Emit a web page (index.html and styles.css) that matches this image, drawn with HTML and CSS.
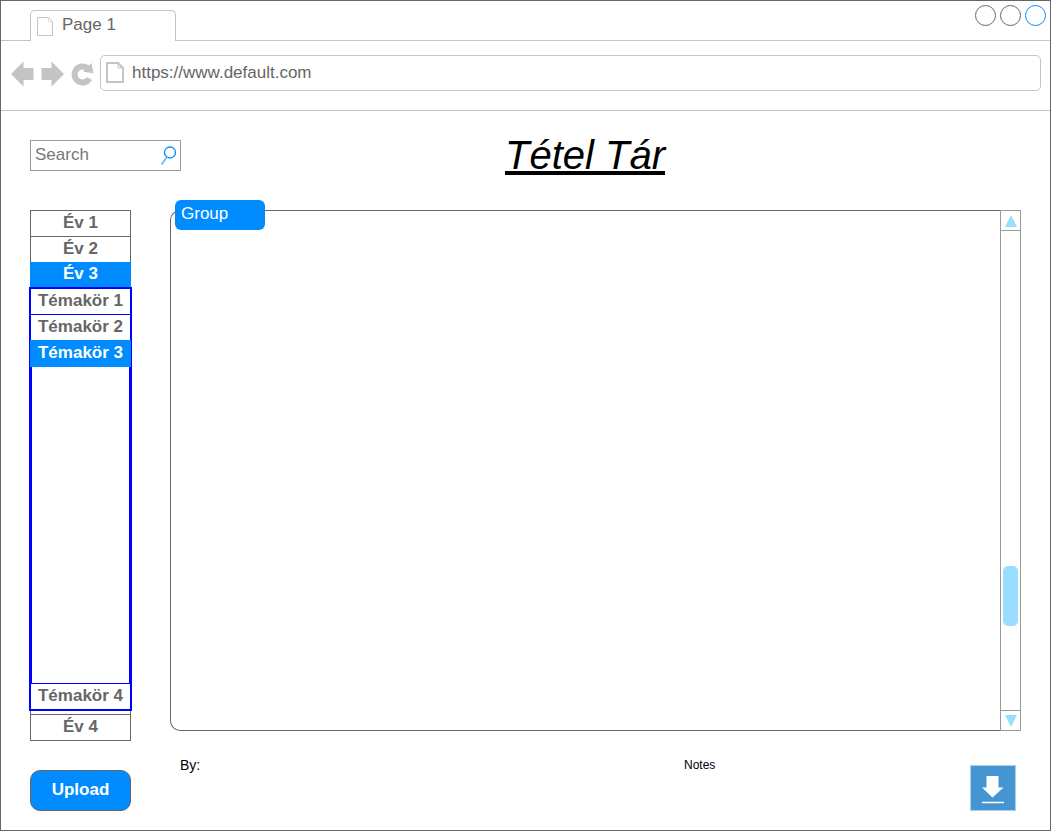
FILE: index.html
```html
<!DOCTYPE html>
<html lang="hu">
<head>
<meta charset="utf-8">
<meta name="viewport" content="width=device-width, initial-scale=1">
<title>Tétel Tár</title>
<link rel="stylesheet" href="styles.css">
</head>
<body>
<div class="window">
  <header class="tab-strip">
    <div class="tab">
      <svg class="tab-icon" width="16" height="19" viewBox="0 0 16 19" fill="none" stroke="#c4c4c4"><path d="M.5.5H11.500L15.500 4.500V18.500H.5Z"/><path d="M11.500.5V4.500H15.500" stroke="#e0e0e0"/></svg>
      <span>Page 1</span>
    </div>
    <div class="window-controls">
      <button class="dot" aria-label="Minimize"></button>
      <button class="dot" aria-label="Maximize"></button>
      <button class="dot dot-active" aria-label="Close"></button>
    </div>
  </header>

  <div class="toolbar">
    <button class="tool" aria-label="Back"><svg width="23" height="26" viewBox="0 0 23 26" fill="#c4c4c4"><path d="M0 13 12.500 .5V7H22.500V19H12.500V25.500Z"/></svg></button>
    <button class="tool" aria-label="Forward"><svg width="23" height="26" viewBox="0 0 23 26" fill="#c4c4c4"><path d="M23 13 10.500 .5V7H.5V19H10.500V25.500Z"/></svg></button>
    <button class="tool" aria-label="Reload"><svg width="23" height="26" viewBox="0 0 23 26"><path d="M16.500 7.200A8 8 0 1 0 18.500 17.500" fill="none" stroke="#c4c4c4" stroke-width="6"/><path d="M20.500 2 22.500 12.500 12 10.500Z" fill="#c4c4c4"/></svg></button>
    <div class="address">
      <svg width="18" height="21" viewBox="0 0 18 21" fill="none" stroke="#c4c4c4" stroke-width="2"><path d="M1 1H12L17 6V20H1Z"/><path d="M12 1V6H17" stroke-width="1"/></svg>
      <input class="address-input" type="text" value="https://www.default.com" aria-label="Address">
    </div>
  </div>

  <main class="page">
    <div class="page-head">
      <div class="search">
        <input class="search-input" type="text" placeholder="Search" aria-label="Search">
        <svg width="17" height="19" viewBox="0 0 17 19" fill="none" stroke="#008cff" stroke-width="1.300"><circle cx="10" cy="6.500" r="5.500"/><path d="M7 11 1.500 18.500" stroke="#66baff" stroke-width="1.800"/></svg>
      </div>
      <h1 class="title">Tétel Tár</h1>
    </div>

    <div class="columns">
      <div class="sidebar">
        <ul class="years">
          <li><button class="item">Év 1</button></li>
          <li class="ruled"><button class="item">Év 2</button></li>
          <li class="open">
            <button class="item item-selected">Év 3</button>
            <ul class="topics">
              <li><button class="item">Témakör 1</button></li>
              <li class="ruled"><button class="item">Témakör 2</button></li>
              <li class="topic-open"><button class="item item-selected item-tall">Témakör 3</button></li>
              <li class="ruled"><button class="item">Témakör 4</button></li>
            </ul>
          </li>
          <li class="ruled"><button class="item">Év 4</button></li>
        </ul>
        <button class="upload">Upload</button>
      </div>

      <div class="content">
        <section class="panel" aria-labelledby="group-label">
          <h2 class="group-label" id="group-label">Group</h2>
          <div class="panel-body"></div>
          <div class="scrollbar">
            <button class="scroll-button" aria-label="Scroll up"><svg width="12" height="12" viewBox="0 0 12 12" fill="#99ddff"><path d="M6 0 12 12H0Z"/></svg></button>
            <div class="track"><div class="thumb"></div></div>
            <button class="scroll-button" aria-label="Scroll down"><svg width="12" height="12" viewBox="0 0 12 12" fill="#99ddff"><path d="M0 0H12L6 12Z"/></svg></button>
          </div>
        </section>
        <footer class="details">
          <span class="author">By:</span>
          <span class="notes">Notes</span>
          <button class="download" aria-label="Download"><svg width="46" height="46" viewBox="0 0 46 46"><path d="M16.500 11H28.500V22.500H33.500L22.500 32.500 12 22.500H16.500Z" fill="#fff"/><path d="M12 37.500H34" stroke="#fff" stroke-width="1.500"/></svg></button>
        </footer>
      </div>
    </div>
  </main>
</div>
</body>
</html>
```
FILE: styles.css
```css
* { box-sizing: border-box; }

body {
  margin: 0;
  background: #fff;
  color: #666;
  font: 17px/20px "Liberation Sans", Arial, sans-serif;
}

button, input { font: inherit; color: inherit; }
button { border: 0; padding: 0; background: none; cursor: pointer; }
svg { display: block; flex: none; }
ul { list-style: none; margin: 0; padding: 0; }

.window {
  display: flex;
  flex-direction: column;
  min-height: calc(100vh - 1px);
  margin: 0 1px 1px 0;
  border: 1px solid #666;
}

.tab-strip {
  display: flex;
  justify-content: space-between;
  height: 40px;
  padding: 9px 4px 0 29px;
  border-bottom: 1px solid #c4c4c4;
}

.tab {
  display: flex;
  gap: 9px;
  width: 146px;
  height: 31px;
  padding: 4px 6px 0;
  border: 1px solid #c4c4c4;
  border-bottom: 0;
  border-radius: 5px 5px 0 0;
  background: #fff;
}

.tab-icon { margin-top: 2px; }

.window-controls { display: flex; gap: 4px; margin-top: -5px; }
.dot { width: 21px; height: 21px; border: 1px solid #666; border-radius: 50%; }
.dot-active { border-color: #008cff; }

.toolbar {
  display: flex;
  align-items: center;
  gap: 7px;
  height: 70px;
  padding: 0 9px 6px 10px;
  border-bottom: 1px solid #c4c4c4;
}

.tool { padding-top: 3px; }

.address {
  display: flex;
  flex: 1;
  align-items: center;
  gap: 8px;
  height: 36px;
  margin-left: -1px;
  padding: 0 5px;
  border: 1px solid #c4c4c4;
  border-radius: 5px;
}

.address-input, .search-input {
  flex: 1;
  min-width: 0;
  padding: 0;
  border: 0;
  outline: 0;
  background: none;
}

.search-input::placeholder { color: #777; opacity: 1; }

.page {
  display: flex;
  flex: 1;
  flex-direction: column;
  padding: 19px 29px;
}

.page-head { display: flex; align-items: center; height: 50px; }

.search {
  display: flex;
  align-items: center;
  width: 151px;
  height: 31px;
  padding: 0 3px 0 4px;
  border: 1px solid #999;
}

.title {
  flex: 1;
  margin: 0;
  padding-right: 32px;
  color: #000;
  font-size: 40px;
  font-style: italic;
  font-weight: 400;
  line-height: 48px;
  text-align: center;
  text-decoration: underline;
}

.columns { display: flex; flex: 1; gap: 39px; margin-top: 30px; }

.sidebar { display: flex; flex-direction: column; gap: 29px; width: 101px; }

.years {
  display: flex;
  flex: 1;
  flex-direction: column;
  border: 1px solid #666;
}

.item {
  display: block;
  width: 100%;
  height: 25px;
  padding-bottom: 2px;
  font-weight: 700;
  white-space: nowrap;
}

.item-selected {
  width: calc(100% + 2px);
  margin: 0 -1px;
  background: #008cff;
  color: #fff;
}

.item-tall { height: 27px; }
.ruled { border-top: 1px solid #666; }
.open { display: flex; flex: 1; flex-direction: column; margin-bottom: 3px; }

.topics {
  display: flex;
  flex: 1;
  flex-direction: column;
  margin: 0 -2px;
  border: 2px solid #00f;
}

.topics .ruled { border-color: #00f; }

.topic-open {
  flex: 1;
  border: solid #00f;
  border-width: 0 1px;
}

.topic-open .item {
  width: calc(100% + 4px);
  margin: 0 -2px;
}

.upload {
  height: 41px;
  padding-bottom: 2px;
  border: 1px solid #666;
  border-radius: 10px;
  background: #008cff;
  color: #fff;
  font-weight: 700;
}

.content { display: flex; flex: 1; flex-direction: column; min-width: 0; }

.panel { position: relative; display: flex; flex: 1; }

.panel-body {
  flex: 1;
  border: 1px solid #666;
  border-right: 0;
  border-radius: 10px 0 0 10px;
}

.group-label {
  position: absolute;
  top: -10px;
  left: 5px;
  width: 90px;
  height: 30px;
  margin: 0;
  padding: 4px 6px;
  border-radius: 6px;
  background: #008cff;
  color: #fff;
  font-size: 17px;
  font-weight: 400;
}

.scrollbar {
  display: flex;
  flex-direction: column;
  width: 21px;
  border: 1px solid #999;
}

.scroll-button {
  display: flex;
  align-items: center;
  justify-content: center;
  height: 19px;
}

.track {
  display: flex;
  flex: 1;
  flex-direction: column;
  border: solid #999;
  border-width: 1px 0;
  padding: 0 2px;
}

.track::before { content: ""; flex: 4; }
.track::after { content: ""; flex: 1; }
.thumb { height: 60px; border-radius: 5px; background: #99ddff; }

.details {
  display: grid;
  grid-template-columns: 7fr 4fr 44px;
  align-items: start;
  height: 80px;
  padding: 24px 5px 0 10px;
  color: #000;
}

.author { font-size: 14px; }
.notes { font-size: 12px; }

.download {
  justify-self: end;
  margin-top: 10px;
  border: 1px solid #a8d0f0;
  background: #4495d1;
}

.download svg { margin: -1px; }
```
